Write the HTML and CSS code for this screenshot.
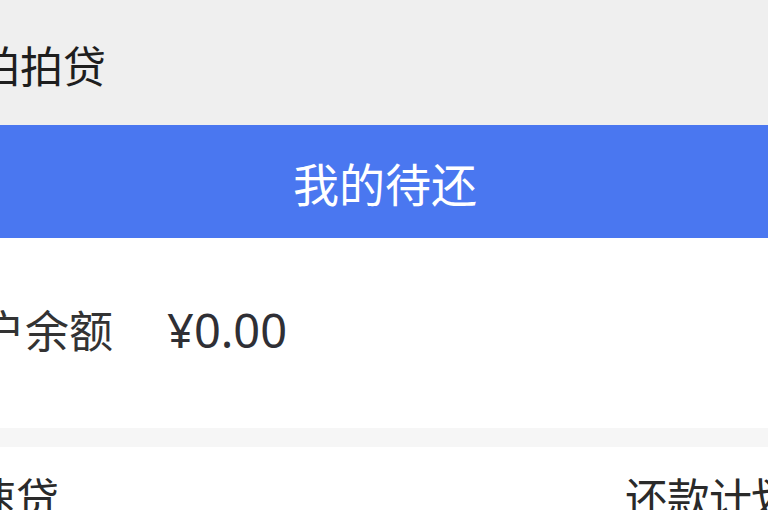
FILE: index.html
```html
<!DOCTYPE html>
<html lang="zh-CN">
<head>
<meta charset="utf-8">
<title>拍拍贷</title>
<link rel="stylesheet" href="styles.css">
</head>
<body>
<div class="screen">
  <header class="header"><span class="app-title">拍拍贷</span></header>
  <nav class="tabbar"><span class="tab-title">我的待还</span></nav>
  <section class="balance">
    <span class="balance-label">账户余额</span>
    <span class="balance-value">¥0.00</span>
  </section>
  <div class="sep"></div>
  <section class="loan">
    <span class="loan-name">极速贷</span>
    <span class="loan-link">还款计划</span>
  </section>
</div>
</body>
</html>
```
FILE: styles.css
```css
html, body {
  margin: 0;
  padding: 0;
  background: #ffffff;
}
.screen {
  width: 768px;
  height: 510px;
  overflow: hidden;
  font-family: "Noto Sans CJK SC", "Noto Sans", sans-serif;
  display: flex;
  flex-direction: column;
}
.header {
  flex: 0 0 auto;
  height: 125px;
  box-sizing: border-box;
  padding-top: 43px;
  background: #efefef;
  white-space: nowrap;
}
.app-title {
  display: block;
  margin-left: -23px;
  font-size: 43px;
  line-height: 43px;
  color: #1e1e1e;
}
.tabbar {
  flex: 0 0 auto;
  height: 113px;
  box-sizing: border-box;
  padding-top: 34px;
  background: #4a77f0;
  text-align: center;
}
.tab-title {
  display: block;
  font-size: 46px;
  line-height: 46px;
  color: #ffffff;
  padding-left: 2px;
}
.balance {
  flex: 0 0 auto;
  height: 190px;
  box-sizing: border-box;
  padding-top: 69px;
  background: #ffffff;
  display: flex;
  align-items: baseline;
  white-space: nowrap;
  color: #333333;
  font-size: 44px;
  line-height: 44px;
}
.balance-label {
  margin-left: -63px;
}
.balance-value {
  margin-left: 54px;
  font-family: "Noto Sans", "Noto Sans CJK SC", sans-serif;
  font-size: 47px;
  color: #2f2f35;
}
.sep {
  flex: 0 0 auto;
  height: 19px;
  background: #f6f6f6;
}
.loan {
  flex: 0 0 auto;
  height: 120px;
  box-sizing: border-box;
  padding-top: 28px;
  background: #ffffff;
  display: flex;
  justify-content: space-between;
  white-space: nowrap;
  color: #2a2a2a;
  font-size: 43px;
  line-height: 43px;
}
.loan-name {
  margin-left: -70px;
}
.loan-link {
  letter-spacing: -1px;
  margin-right: -25px;
}
```
